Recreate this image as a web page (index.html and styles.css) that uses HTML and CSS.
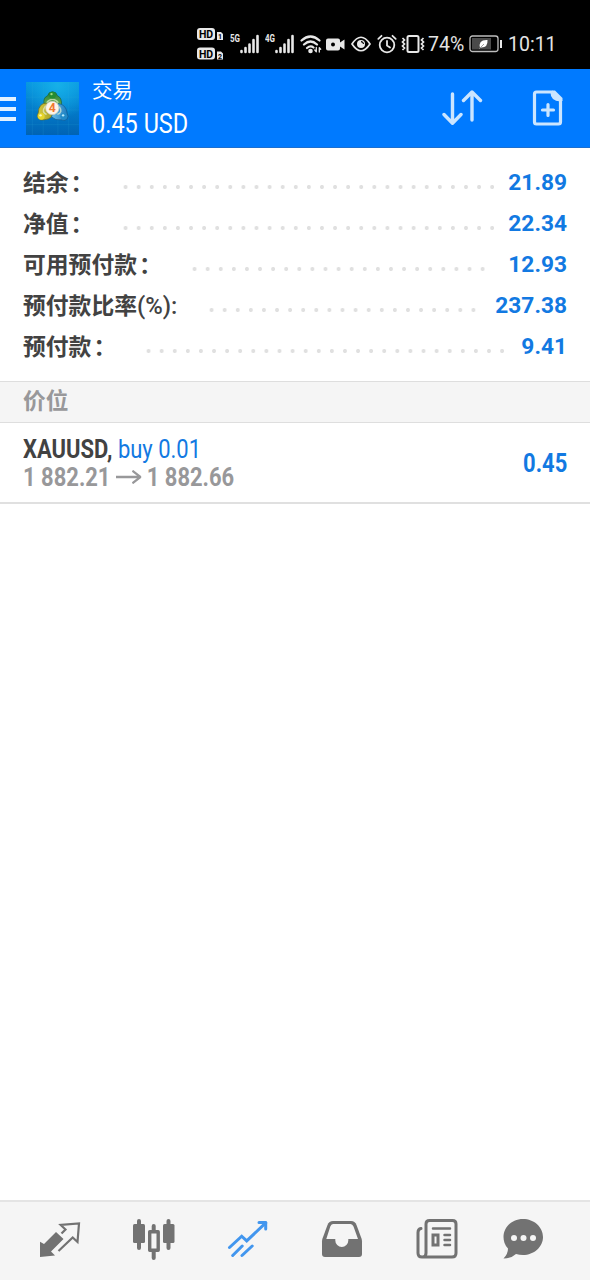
FILE: index.html
```html
<!DOCTYPE html>
<html lang="zh-CN">
<head>
  <meta charset="UTF-8">
  <title>交易</title>
  <link rel="stylesheet" href="styles.css">
</head>
<body>
  <!-- Status bar -->
  <div class="status-bar">
    <svg class="hd" width="28" height="34" viewBox="0 0 28 34">
      <g fill="#e8e8e8">
        <rect x="0" y="1" width="18" height="12" rx="3"/>
        <rect x="0" y="20.500" width="18" height="12" rx="3"/>
        <path d="M20 5h4l2 2v6h-6zM20 24.500h4l2 2v6h-6z"/>
      </g>
      <g class="hd-text">
        <text x="2" y="11" textLength="14">HD</text>
        <text x="2" y="30.500" textLength="14">HD</text>
        <text class="tiny" x="21" y="12">1</text>
        <text class="tiny" x="21" y="31.500">2</text>
      </g>
    </svg>
    <svg class="signal" width="30" height="22" viewBox="0 0 30 22">
      <text x="0" y="9" textLength="10" lengthAdjust="spacingAndGlyphs">5G</text>
      <path d="M11.500 18v1M15.500 15v4M19.500 11.500v7.500M23.500 7v12M27.500 3v16" stroke="#e8e8e8" stroke-width="2.600" stroke-linecap="round"/>
    </svg>
    <svg class="signal" width="30" height="22" viewBox="0 0 30 22">
      <text x="0" y="9" textLength="10" lengthAdjust="spacingAndGlyphs">4G</text>
      <path d="M11.500 18v1M15.500 15v4M19.500 11.500v7.500M23.500 7v12M27.500 3v16" stroke="#e8e8e8" stroke-width="2.600" stroke-linecap="round"/>
    </svg>
    <svg class="wifi" width="22" height="20" viewBox="0 0 22 20" fill="none" stroke="#e8e8e8" stroke-width="2.200" stroke-linecap="round">
      <path d="M1.500 6.500Q10.500-1.500 19.500 6.500M4 10.500Q10.500 4.500 17 10.500M7 14Q10.500 11 13.500 13.500"/>
      <circle cx="10.500" cy="17" r="1.200" fill="#e8e8e8"/>
      <path d="M16.300 13.500v4M14.800 16l1.500 1.700M19.300 18v-4M19.300 13.800l1.400 1.500" stroke-width="1.300"/>
    </svg>
    <svg class="camera" width="19" height="13" viewBox="0 0 19 13">
      <path fill="#e8e8e8" d="M2 .5h10q2 0 2 2V4.500l4.500-3v10l-4.500-3v2q0 2-2 2H2q-2 0-2-2v-8q0-2 2-2z"/>
      <circle cx="7" cy="6.500" r="2"/>
    </svg>
    <svg class="eye" width="20" height="16" viewBox="0 0 20 16" fill="none" stroke="#e8e8e8" stroke-width="1.700">
      <path d="M1 8Q10-5.500 19 8Q10 21.500 1 8z"/>
      <circle cx="10" cy="8" r="4" fill="#e8e8e8" stroke="none"/>
      <path d="M10 5.600a2.400 2.400 0 0 1 2.400 2.400" stroke="#000" stroke-width="1.200"/>
    </svg>
    <svg class="alarm" width="20" height="20" viewBox="0 0 20 20" fill="none" stroke="#e8e8e8" stroke-width="1.800" stroke-linecap="round">
      <circle cx="10" cy="11" r="7.300"/>
      <path d="M10 7v4.500l3 2M1.300 4.800l3.200-3M18.700 4.800l-3.200-3"/>
    </svg>
    <svg class="vibrate" width="24" height="20" viewBox="0 0 24 20" fill="none" stroke="#e8e8e8">
      <rect x="6.500" y="2" width="11" height="16" rx="1.500" stroke-width="2"/>
      <path d="M1.500 4l2 2-2 2 2 2-2 2 2 2-2 2M22.500 4l-2 2 2 2-2 2 2 2-2 2 2 2" stroke-width="1.700"/>
    </svg>
    <span class="percent">74%</span>
    <svg class="battery" width="34" height="18" viewBox="0 0 34 18">
      <rect x="1" y="1" width="28" height="15.500" rx="2.500" fill="none" stroke="#bdbdbd" stroke-width="1.300"/>
      <rect x="3" y="3" width="19" height="11.500" fill="#4a4a4a"/>
      <path d="M32 5v8" stroke="#e8e8e8" stroke-width="2"/>
      <path d="M11 13Q9 4.500 18.500 5Q19 12.500 12.500 12.500z" fill="#fff"/>
      <path d="M10 14l5-5" stroke="#888" stroke-width=".8"/>
    </svg>
    <span class="clock">10:11</span>
  </div>

  <!-- App header -->
  <div class="header">
    <div class="menu"><i></i><i></i><i></i></div>
    <svg class="logo" width="53" height="53" viewBox="0 0 54 54">
      <defs>
        <linearGradient id="sea" x2="0" y2="1"><stop offset="0" stop-color="#0796e0"/><stop offset="1" stop-color="#0063b4"/></linearGradient>
        <radialGradient id="glow" cx=".6" cy=".05" r=".65"><stop offset="0" stop-color="#16b0e8"/><stop offset="1" stop-color="#16b0e8" stop-opacity="0"/></radialGradient>
        <linearGradient id="green" x2="0" y2="1"><stop offset="0" stop-color="#1f7d3a"/><stop offset="1" stop-color="#7db84c"/></linearGradient>
        <linearGradient id="gold"><stop offset="0" stop-color="#d8cb3c"/><stop offset="1" stop-color="#a5a02a"/></linearGradient>
        <linearGradient id="blue"><stop offset="0" stop-color="#69bce8"/><stop offset="1" stop-color="#1a78bc"/></linearGradient>
      </defs>
      <rect width="54" height="54" fill="url(#sea)"/>
      <rect width="54" height="54" fill="url(#glow)"/>
      <path d="M6.500 0v54M17.500 0v54M32.500 0v54M43.500 0v54M0 15.500h54M0 28.500h54M0 43.500h54" stroke="#35b3de" stroke-opacity=".15"/>
      <path d="M18.500 23Q17 16 22 14q1-4 5-4t5 4q5 2 4 10l-4 3H22z" fill="url(#green)" stroke="#17603a" stroke-width=".7"/>
      <path d="M21 21.500q-8 0-8.500 10-2 3 0 5.500t6 1.500q5 0 8.500-4l-2-9z" fill="url(#gold)" stroke="#67691f" stroke-width=".7"/>
      <path d="M33 22q8 1 9 10 2 3 0 5.500t-6 1q-6 1-10-3l3-8z" fill="url(#blue)" stroke="#135a8e" stroke-width=".7"/>
      <path d="M21 21q6-7 12 0M20 24q-5 7 1 9M34 25q4 6-2 8" fill="none" stroke="#e6efcf" stroke-width="1.500" opacity=".7"/>
      <circle cx="27" cy="13.500" r="3.500" fill="#268d32"/>
      <circle cx="15.500" cy="35" r="3.500" fill="#e6d52c"/>
      <circle cx="38.500" cy="35" r="3.500" fill="#238bc8"/>
      <circle cx="26" cy="12.300" r="1.200" fill="#a5dc80"/>
      <circle cx="14.800" cy="34" r="1.200" fill="#fffac0"/>
      <circle cx="37.800" cy="34" r="1.200" fill="#b9edff"/>
      <circle cx="26.800" cy="26.500" r="6.800" fill="#fff3e6" stroke="#c9ccc0" stroke-width=".7"/>
      <text class="logo-text" x="23.200" y="31">4</text>
    </svg>
    <div class="heading">
      <div class="title">交易</div>
      <div class="profit condensed">0.45 USD</div>
    </div>
    <svg class="sort" width="42" height="36" viewBox="0 0 42 36" fill="none" stroke="#cbe5ff" stroke-width="3.400" stroke-linecap="round" stroke-linejoin="round">
      <path d="M11.500 4v29M3 24.500l8.500 8.700L20 24.500M31 30V2.500M22.500 10.500L31 2l8.500 8.500"/>
    </svg>
    <svg class="new-order" width="32" height="38" viewBox="0 0 32 38">
      <path d="M4.500 3H20q0 7.500 8.500 8V33q0 2-2 2h-22q-2 0-2-2V5q0-2 2-2z" fill="none" stroke="#cbe5ff" stroke-width="3.200" stroke-linejoin="round"/>
      <path d="M20 1.500h3L30.500 9v3H27q-7-1-7-10.500z" fill="#cbe5ff"/>
      <path d="M16 15.500v11M10.500 21h11" stroke="#cbe5ff" stroke-width="3.200" stroke-linecap="round"/>
    </svg>
  </div>

  <!-- Account -->
  <div class="account">
    <div class="row"><span class="label">结余<span class="colon">：</span></span><span class="dots" style="--dots: 29"></span><span class="value">21.89</span></div>
    <div class="row"><span class="label">净值<span class="colon">：</span></span><span class="dots" style="--dots: 29"></span><span class="value">22.34</span></div>
    <div class="row"><span class="label">可用预付款<span class="colon">：</span></span><span class="dots" style="--dots: 23"></span><span class="value">12.93</span></div>
    <div class="row"><span class="label">预付款比率<span class="latin">(%):</span></span><span class="dots" style="--dots: 21"></span><span class="value">237.38</span></div>
    <div class="row"><span class="label">预付款<span class="colon">：</span></span><span class="dots" style="--dots: 28"></span><span class="value">9.41</span></div>
  </div>

  <div class="section">价位</div>

  <div class="position">
    <div class="details">
      <div class="symbol condensed"><b>XAUUSD,</b> <span class="buy">buy 0.01</span></div>
      <div class="prices condensed">1 882.21
        <svg class="arrow" width="30" height="16" viewBox="0 0 30 16" fill="none" stroke="#98989a" stroke-width="2.400">
          <path d="M0 7h28M19.500 .8L29 7l-9.500 6.200"/>
        </svg>
        1 882.66</div>
    </div>
    <div class="result condensed">0.45</div>
  </div>

  <!-- Bottom tabs -->
  <div class="tabs">
    <svg width="98" height="78" viewBox="0 7 98 78">
      <path d="M40 46.800V62l15-1.500-4-4L63.500 44 56 37 44 49z" fill="#727272"/>
      <path d="M61.500 38.500l4-4-4.800-4.500L79 28.500 77.500 47l-4.800-4.500L58.500 56" fill="none" stroke="#727272" stroke-width="2.200"/>
    </svg>
    <svg width="98" height="78" viewBox="98 7 98 78">
      <path d="M139 26v27M168.500 26v27M153.700 31v8M153.700 53v10" stroke="#727272" stroke-width="4" stroke-linecap="round"/>
      <rect x="133" y="29" width="12" height="19" rx="1.500" fill="#727272"/>
      <rect x="163" y="29" width="11.500" height="19" rx="1.500" fill="#727272"/>
      <rect x="149.700" y="36.700" width="8.500" height="18.500" fill="#f5f5f5" stroke="#727272" stroke-width="3.400" stroke-linejoin="round"/>
    </svg>
    <svg width="98" height="78" viewBox="196 7 98 78" fill="none" stroke="#4296ee" stroke-width="3" stroke-linecap="round">
      <path d="M229.500 52.500l12.200-11.300 5 4.700 19-18M232.700 60.500l9.500-9.500M242 60.500l10.200-9.500"/>
      <path d="M259 27.500h6.700V34" stroke-linejoin="round"/>
    </svg>
    <svg width="98" height="78" viewBox="294 2 98 78">
      <path d="M333 21h18q4 0 5.500 4l5 13.500q.5 1.500.5 3V54q0 3-3 3h-34q-3 0-3-3V41.500q0-1.500.5-3l5-13.500q1.500-4 5.500-4z" fill="#727272"/>
      <path d="M333 24h17.500q2 0 3 2.500l4.500 12.500H348.300v1.500a6.500 6.500 0 0 1-13 0V39H326.300l4-12.500q.8-2.500 2.700-2.500z" fill="#f5f5f5"/>
    </svg>
    <svg width="98" height="78" viewBox="392 2 98 78" fill="none" stroke="#727272" stroke-width="3">
      <path d="M421 28.500q-3 .5-3 4v20.500q0 4 4 4h30q4 0 4-4V24q0-3.500-3.500-3.500h-23q-3.500 0-3.500 3.500v29q0 4-3.500 4" stroke-linecap="round"/>
      <path d="M433 28.500h17M444.500 35h5.500M444.500 40h5.500M444.500 45h5.500" stroke-width="2.500" stroke-linecap="round"/>
      <rect x="433" y="35" width="5" height="10"/>
    </svg>
    <svg width="98" height="78" viewBox="490 2 98 78">
      <path d="M523 19c11 0 20 8 20 18s-9 18-20 18q-3.500 0-7-1-5 4.500-12.500 4.500 4.500-4.500 4.500-10-4.500-4.500-4.500-11.500c0-10 8.500-18 19.500-18z" fill="#727272"/>
      <g fill="#f5f5f5"><circle cx="514" cy="38" r="3"/><circle cx="523.500" cy="38" r="3"/><circle cx="533" cy="38" r="3"/></g>
    </svg>
  </div>
</body>
</html>
```
FILE: styles.css
```css
body {
  margin: 0;
  height: 1280px;
  display: flex;
  flex-direction: column;
  background: #fff;
  font-family: Roboto, "Noto Sans CJK SC", sans-serif;
  color: #424242;
  overflow: hidden;
}
svg {
  display: block;
  flex: none;
}
.condensed {
  transform: scaleX(0.845);
  transform-origin: left center;
  white-space: nowrap;
}

/* status bar */
.status-bar {
  height: 69px;
  padding-left: 197px;
  box-sizing: border-box;
  background: #000;
  color: #e4e4e4;
  display: flex;
  align-items: center;
  padding-top: 19px;
  font-size: 19.5px;
}
.hd {
  margin-right: 5px;
}
.hd-text {
  font-size: 10.5px;
  font-weight: bold;
}
.hd-text .tiny {
  font-size: 7px;
}
.signal {
  margin-right: 5px;
}
.signal text {
  font-size: 10.5px;
  font-weight: bold;
  fill: #e8e8e8;
}
.wifi {
  margin-right: 4px;
}
.camera {
  margin-right: 6px;
}
.eye {
  margin-right: 6px;
}
.alarm {
  margin-right: 4px;
}
.vibrate {
  margin-right: 3px;
}
.percent {
  width: 41px;
}
.battery {
  margin-right: 5px;
}

/* header */
.header {
  height: 79px;
  box-sizing: border-box;
  background: #007aff;
  border-bottom: 1px solid #1c6fd0;
  display: flex;
  align-items: center;
  color: #fff;
}
.menu {
  width: 16px;
  margin: 2px 10px 0 0;
  display: flex;
  flex-direction: column;
  gap: 6px;
}
.menu i {
  height: 4px;
  background: #e2f1ff;
}
.logo {
  margin-right: 13px;
}
.logo-text {
  font-size: 12.5px;
  font-weight: bold;
  fill: #f07830;
}
.heading {
  width: 348.5px;
  padding-top: 2px;
}
.title {
  font-size: 20.5px;
  line-height: 31px;
}
.profit {
  font-size: 27px;
  line-height: 35px;
  transform: scaleX(0.87);
}
.sort {
  margin-right: 49px;
}

/* account summary */
.account {
  height: 233px;
  box-sizing: border-box;
  padding: 14px 23px 0;
}
.row {
  height: 41px;
  display: flex;
  align-items: center;
}
.label {
  flex: none;
  font-size: 22.8px;
  font-weight: bold;
  margin: -2px 28px 0 0;
  white-space: nowrap;
}
.colon {
  margin: 0 -2px 0 2px;
}
.latin {
  font-size: 23.8px;
  font-weight: 500;
  line-height: 1;
}
.dots {
  flex: none;
  width: calc(var(--dots) * 13.1px);
  height: 4px;
  margin-top: 9px;
  background: radial-gradient(circle, #e0e0e0 1.7px, transparent 2.3px) 0 0 / 13.1px 4px;
}
.value {
  margin-left: auto;
  font-size: 22.7px;
  font-weight: bold;
  color: #1279e2;
}
.section {
  height: 42px;
  box-sizing: border-box;
  border-top: 1px solid #dedede;
  border-bottom: 1px solid #dedede;
  background: #f5f5f5;
  padding-left: 23px;
  font-size: 22.7px;
  line-height: 40px;
  font-weight: bold;
  color: #98989a;
}

/* open position */
.position {
  height: 81px;
  box-sizing: border-box;
  border-bottom: 2px solid #e0e0e0;
  padding: 0 23px;
  display: flex;
  align-items: center;
  justify-content: space-between;
  font-size: 26px;
  line-height: 28px;
}
.buy {
  color: #1279e2;
}
.prices {
  font-weight: bold;
  color: #98989a;
}
.arrow {
  display: inline-block;
}
.result {
  font-weight: bold;
  color: #1279e2;
  transform-origin: right center;
}

/* tabs */
.tabs {
  margin-top: auto;
  height: 80px;
  box-sizing: border-box;
  border-top: 2px solid #e4e4e4;
  background: #f5f5f5;
  display: flex;
}
```
